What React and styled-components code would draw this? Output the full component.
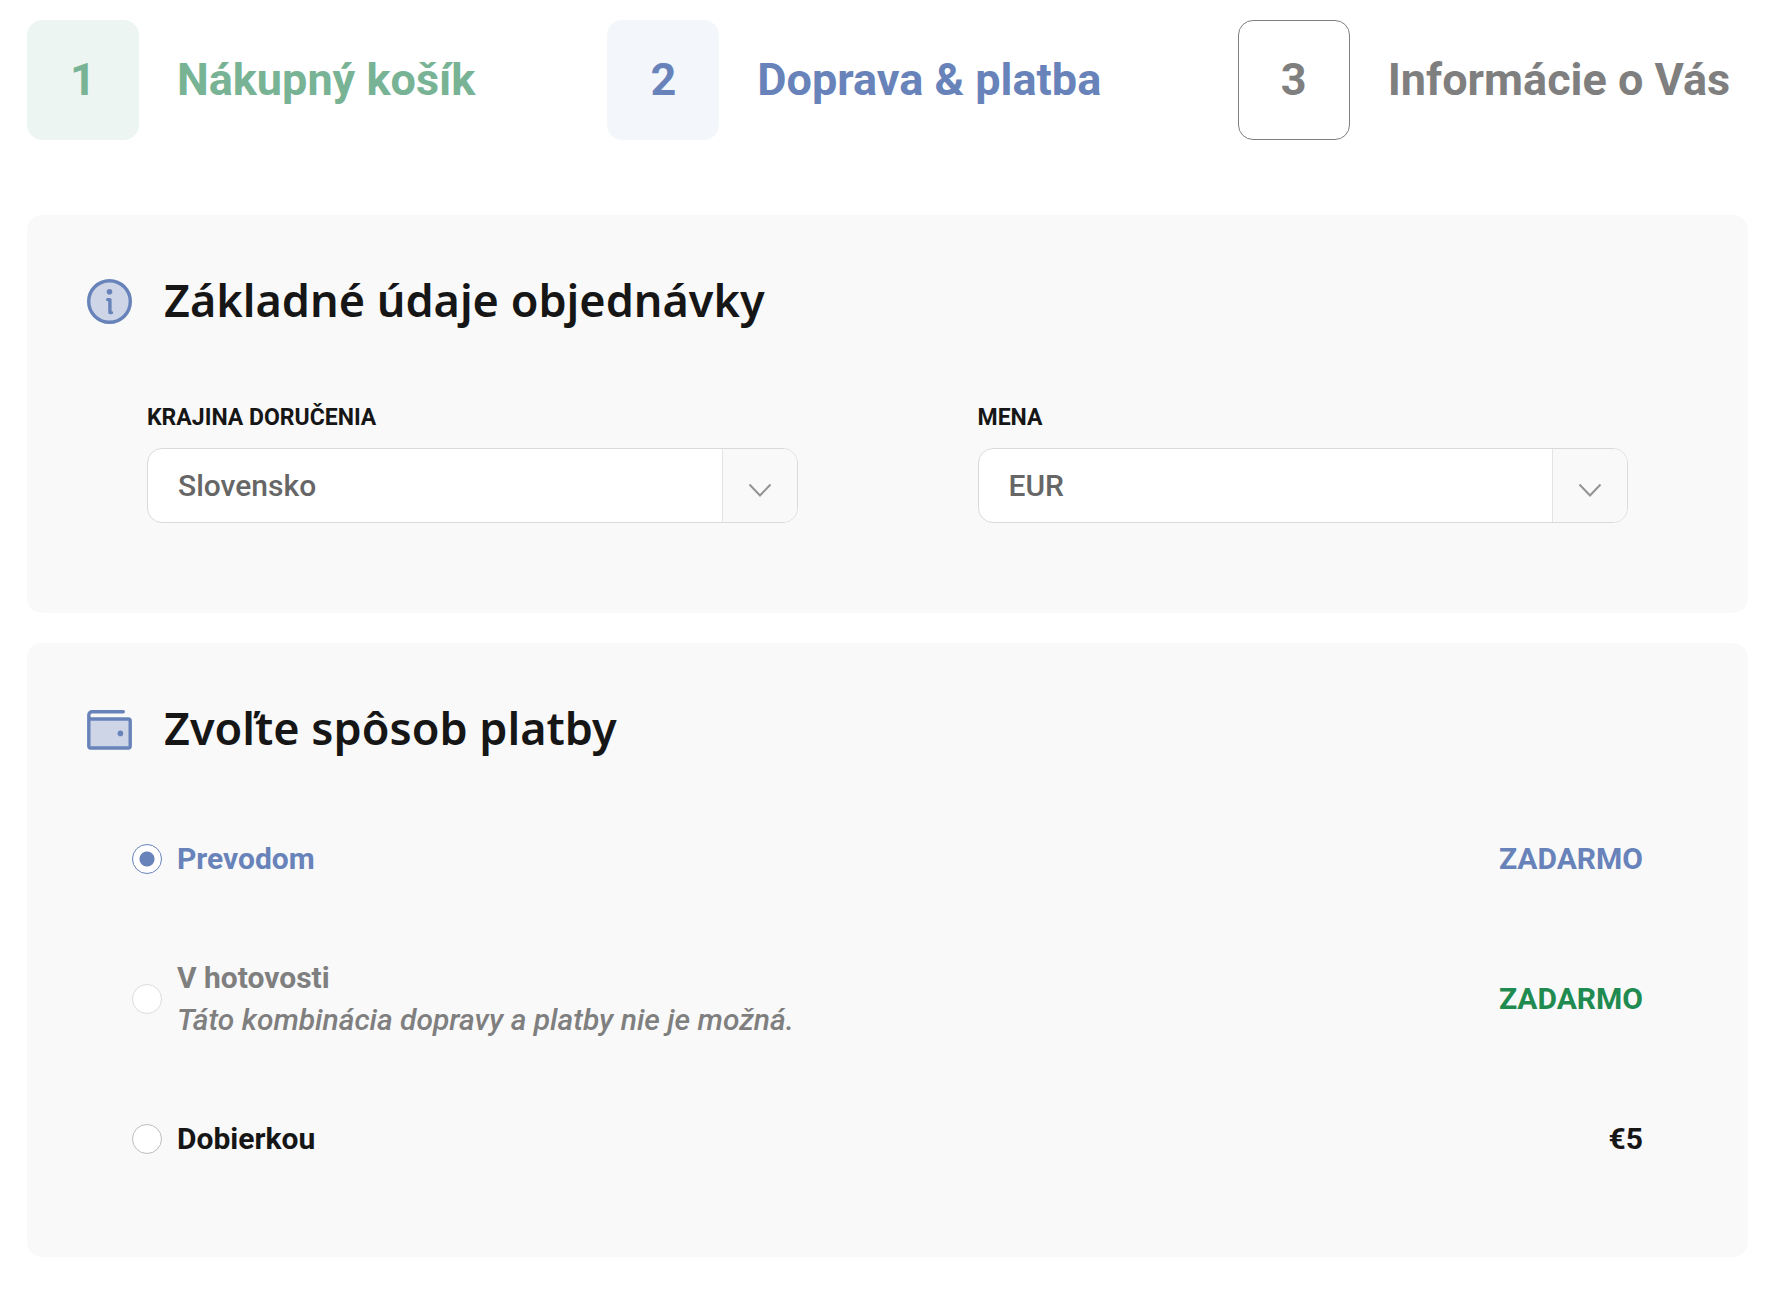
import React, { useState } from "react";
import styled, { createGlobalStyle } from "styled-components";

const GlobalStyle = createGlobalStyle`
  * {
    box-sizing: border-box;
  }

  body {
    margin: 0;
    background: #fff;
    color: #161616;
    font-family: Roboto, "Liberation Sans", sans-serif;
    font-size: 30px;
    line-height: 42px;
  }
`;

const tones = {
  done: { text: "#77b394", background: "#ecf5f1", border: "#ecf5f1" },
  active: { text: "#6883ba", background: "#f3f6fb", border: "#f3f6fb" },
  next: { text: "#7f7f7f", background: "#fff", border: "#7f7f7f" },
};

const Page = styled.main`
  padding: 20px 26px 34px 27px;
`;

const Steps = styled.ol`
  display: grid;
  grid-template-columns: 58fr 63fr 51fr;
  list-style: none;
  margin: 0 0 75px;
  padding: 0;
`;

const StepLink = styled.a`
  display: flex;
  align-items: center;
  gap: 38px;
  color: ${({ $tone }) => tones[$tone].text};
  font-size: 45px;
  font-weight: 700;
  text-decoration: none;
  white-space: nowrap;
`;

const StepNumber = styled.span`
  display: flex;
  align-items: center;
  justify-content: center;
  width: 112px;
  height: 120px;
  border: 1px solid ${({ $tone }) => tones[$tone].border};
  border-radius: 15px;
  background: ${({ $tone }) => tones[$tone].background};
`;

const Card = styled.section`
  margin-bottom: 30px;
  padding: 60px 60px 90px;
  border-radius: 15px;
  background: #f9f9f9;
`;

const CardHeader = styled.header`
  display: flex;
  align-items: flex-end;
  gap: 32px;
`;

const Title = styled.h2`
  margin: 0;
  font-family: "Noto Sans", sans-serif;
  font-size: 45px;
  font-weight: 600;
  line-height: 49px;
`;

const Fields = styled.div`
  display: grid;
  grid-template-columns: 1fr 1fr;
  gap: 180px;
  padding: 79px 60px 0;
`;

const FieldLabel = styled.label`
  display: block;
  margin-bottom: 15px;
  font-size: 23px;
  font-weight: 700;
  line-height: 30px;
  text-transform: uppercase;
`;

const SelectBox = styled.div`
  position: relative;
`;

const Select = styled.select`
  display: block;
  width: 100%;
  height: 75px;
  padding: 0 90px 0 30px;
  border: 1px solid #dadada;
  border-radius: 15px;
  appearance: none;
  background: #fff;
  color: #666;
  font: inherit;
  font-weight: 500;
`;

const Arrow = styled.span`
  position: absolute;
  top: 1px;
  right: 1px;
  bottom: 1px;
  display: flex;
  width: 75px;
  border-left: 1px solid #e4e4e4;
  border-radius: 0 14px 14px 0;
  background: #f9f9f9;
  pointer-events: none;
`;

const Options = styled.div`
  display: flex;
  flex-direction: column;
  gap: 77px;
  padding: 86px 45px 7px;
`;

const Option = styled.label`
  display: flex;
  align-items: center;
  gap: 15px;
  color: ${({ $color }) => $color};
  font-weight: 700;
`;

const Radio = styled.input`
  flex: none;
  width: 30px;
  height: 30px;
  margin: 0;
  border: 1px solid #bdbdbd;
  border-radius: 50%;
  appearance: none;
  background: #fff;

  &:checked {
    border-color: #6883ba;
    background: radial-gradient(circle, #6883ba 7px, #fff 8px);
  }

  &:disabled {
    border-color: #dcdcdc;
  }
`;

const OptionText = styled.span`
  flex: 1;
`;

const Note = styled.em`
  display: block;
  font-weight: 500;
`;

const Price = styled.span`
  color: ${({ $color }) => $color};
`;

const InfoIcon = () => (
  <svg width="45" height="45" viewBox="0 0 45 45" fill="none" aria-hidden="true">
    <circle cx="22.5" cy="22.5" r="20.8" fill="#ced5e7" stroke="#6883ba" strokeWidth="3.4" />
    <circle cx="22.5" cy="12.8" r="2.8" fill="#6883ba" />
    <path
      d="M20.6 20.6h2.3v13h1.6"
      stroke="#6883ba"
      strokeWidth="3.4"
      strokeLinecap="round"
      strokeLinejoin="round"
    />
  </svg>
);

const WalletIcon = () => (
  <svg width="45" height="45" viewBox="0 0 45 45" fill="none" aria-hidden="true">
    <path d="M2 12h41v29H2z" fill="#ced5e7" />
    <path
      d="M36.3 4.8H5a3.2 3.2 0 0 0-3.2 3.2v31a2 2 0 0 0 2 2h37.4a2 2 0 0 0 2-2V14a2 2 0 0 0-2-2H5a3 3 0 0 1-3.2-3"
      stroke="#6883ba"
      strokeWidth="3.4"
      strokeLinecap="round"
      strokeLinejoin="round"
    />
    <circle cx="33.4" cy="26.4" r="2.8" fill="#6883ba" />
  </svg>
);

const steps = [
  { number: 1, label: "Nákupný košík", tone: "done" },
  { number: 2, label: "Doprava & platba", tone: "active" },
  { number: 3, label: "Informácie o Vás", tone: "next" },
];

const payments = [
  { id: "transfer", name: "Prevodom", price: "ZADARMO", free: true },
  {
    id: "cash",
    name: "V hotovosti",
    note: "Táto kombinácia dopravy a platby nie je možná.",
    price: "ZADARMO",
    free: true,
    disabled: true,
  },
  { id: "delivery", name: "Dobierkou", price: "€5" },
];

const SelectField = ({ id, label, options }) => (
  <div>
    <FieldLabel htmlFor={id}>{label}</FieldLabel>
    <SelectBox>
      <Select id={id}>
        {options.map((option) => (
          <option key={option}>{option}</option>
        ))}
      </Select>
      <Arrow>
        <svg width="74" height="73" viewBox="0 0 74 73" fill="none" aria-hidden="true">
          <path d="M26.5 35.5l10.5 11 10.5-11" stroke="#939393" strokeWidth="2" />
        </svg>
      </Arrow>
    </SelectBox>
  </div>
);

const App = () => {
  const [payment, setPayment] = useState("transfer");

  const optionColor = ({ id, disabled }) => {
    if (disabled) return "#7f7f7f";
    return id === payment ? "#6883ba" : "#161616";
  };

  const priceColor = ({ id, free }) => {
    if (id === payment) return "#6883ba";
    return free ? "#1f8b50" : "#161616";
  };

  return (
    <Page>
      <GlobalStyle />
      <Steps>
        {steps.map(({ number, label, tone }) => (
          <li key={number}>
            <StepLink href="#" $tone={tone}>
              <StepNumber $tone={tone}>{number}</StepNumber>
              {label}
            </StepLink>
          </li>
        ))}
      </Steps>

      <Card>
        <CardHeader>
          <InfoIcon />
          <Title>Základné údaje objednávky</Title>
        </CardHeader>
        <Fields>
          <SelectField id="country" label="Krajina doručenia" options={["Slovensko", "Česko"]} />
          <SelectField id="currency" label="Mena" options={["EUR", "CZK"]} />
        </Fields>
      </Card>

      <Card>
        <CardHeader>
          <WalletIcon />
          <Title>Zvoľte spôsob platby</Title>
        </CardHeader>
        <Options>
          {payments.map((item) => (
            <Option key={item.id} $color={optionColor(item)}>
              <Radio
                type="radio"
                name="payment"
                checked={item.id === payment}
                disabled={item.disabled}
                onChange={() => setPayment(item.id)}
              />
              <OptionText>
                {item.name}
                {item.note && <Note>{item.note}</Note>}
              </OptionText>
              <Price $color={priceColor(item)}>{item.price}</Price>
            </Option>
          ))}
        </Options>
      </Card>
    </Page>
  );
};

export default App;
